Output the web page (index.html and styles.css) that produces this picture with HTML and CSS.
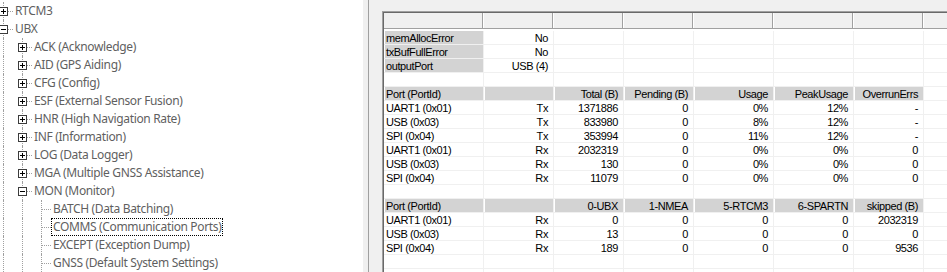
FILE: index.html
```html
<!DOCTYPE html>
<html>
<head>
<meta charset="utf-8">
<link rel="stylesheet" href="styles.css">
</head>
<body>
<div class="tree">
  <div class="trow"><span class="col v h"><span class="box plus"></span></span><span class="lbl">RTCM3</span></div>
  <div class="trow"><span class="col v h"><span class="box"></span></span><span class="lbl">UBX</span></div>
  <div class="trow"><span class="col v"></span><span class="col v h"><span class="box plus"></span></span><span class="lbl">ACK (Acknowledge)</span></div>
  <div class="trow"><span class="col v"></span><span class="col v h"><span class="box plus"></span></span><span class="lbl">AID (GPS Aiding)</span></div>
  <div class="trow"><span class="col v"></span><span class="col v h"><span class="box plus"></span></span><span class="lbl">CFG (Config)</span></div>
  <div class="trow"><span class="col v"></span><span class="col v h"><span class="box plus"></span></span><span class="lbl">ESF (External Sensor Fusion)</span></div>
  <div class="trow"><span class="col v"></span><span class="col v h"><span class="box plus"></span></span><span class="lbl">HNR (High Navigation Rate)</span></div>
  <div class="trow"><span class="col v"></span><span class="col v h"><span class="box plus"></span></span><span class="lbl">INF (Information)</span></div>
  <div class="trow"><span class="col v"></span><span class="col v h"><span class="box plus"></span></span><span class="lbl">LOG (Data Logger)</span></div>
  <div class="trow"><span class="col v"></span><span class="col v h"><span class="box plus"></span></span><span class="lbl">MGA (Multiple GNSS Assistance)</span></div>
  <div class="trow"><span class="col v"></span><span class="col v h"><span class="box"></span></span><span class="lbl">MON (Monitor)</span></div>
  <div class="trow"><span class="col v"></span><span class="col v"></span><span class="col v h"></span><span class="lbl">BATCH (Data Batching)</span></div>
  <div class="trow"><span class="col v"></span><span class="col v"></span><span class="col v h"></span><span class="lbl sel">COMMS (Communication Ports)</span></div>
  <div class="trow"><span class="col v"></span><span class="col v"></span><span class="col v h"></span><span class="lbl">EXCEPT (Exception Dump)</span></div>
  <div class="trow"><span class="col v"></span><span class="col v"></span><span class="col v h"></span><span class="lbl">GNSS (Default System Settings)</span></div>
</div>
<div class="splitter"></div>
<div class="panel">
  <div class="frame">
    <div class="grid">
      <div class="hrow"><span class="hc"></span><span class="hc"></span><span class="hc"></span><span class="hc"></span><span class="hc"></span><span class="hc"></span><span class="hc"></span><span class="hc"></span></div>
      <div class="data">
        <div class="row"><span class="c g">memAllocError</span><span class="c r">No</span><span class="c"></span><span class="c"></span><span class="c"></span><span class="c"></span><span class="c"></span><span class="c"></span></div>
        <div class="row"><span class="c g">txBufFullError</span><span class="c r">No</span><span class="c"></span><span class="c"></span><span class="c"></span><span class="c"></span><span class="c"></span><span class="c"></span></div>
        <div class="row"><span class="c g">outputPort</span><span class="c r">USB (4)</span><span class="c"></span><span class="c"></span><span class="c"></span><span class="c"></span><span class="c"></span><span class="c"></span></div>
        <div class="row"><span class="c"></span><span class="c"></span><span class="c"></span><span class="c"></span><span class="c"></span><span class="c"></span><span class="c"></span><span class="c"></span></div>
        <div class="row"><span class="c g">Port (PortId)</span><span class="c g"></span><span class="c g r">Total (B)</span><span class="c g r">Pending (B)</span><span class="c g r">Usage</span><span class="c g r">PeakUsage</span><span class="c g r">OverrunErrs</span><span class="c"></span></div>
        <div class="row"><span class="c">UART1 (0x01)</span><span class="c r">Tx</span><span class="c r">1371886</span><span class="c r">0</span><span class="c r">0%</span><span class="c r">12%</span><span class="c r">-</span><span class="c"></span></div>
        <div class="row"><span class="c">USB (0x03)</span><span class="c r">Tx</span><span class="c r">833980</span><span class="c r">0</span><span class="c r">8%</span><span class="c r">12%</span><span class="c r">-</span><span class="c"></span></div>
        <div class="row"><span class="c">SPI (0x04)</span><span class="c r">Tx</span><span class="c r">353994</span><span class="c r">0</span><span class="c r">11%</span><span class="c r">12%</span><span class="c r">-</span><span class="c"></span></div>
        <div class="row"><span class="c">UART1 (0x01)</span><span class="c r">Rx</span><span class="c r">2032319</span><span class="c r">0</span><span class="c r">0%</span><span class="c r">0%</span><span class="c r">0</span><span class="c"></span></div>
        <div class="row"><span class="c">USB (0x03)</span><span class="c r">Rx</span><span class="c r">130</span><span class="c r">0</span><span class="c r">0%</span><span class="c r">0%</span><span class="c r">0</span><span class="c"></span></div>
        <div class="row"><span class="c">SPI (0x04)</span><span class="c r">Rx</span><span class="c r">11079</span><span class="c r">0</span><span class="c r">0%</span><span class="c r">0%</span><span class="c r">0</span><span class="c"></span></div>
        <div class="row"><span class="c"></span><span class="c"></span><span class="c"></span><span class="c"></span><span class="c"></span><span class="c"></span><span class="c"></span><span class="c"></span></div>
        <div class="row"><span class="c g">Port (PortId)</span><span class="c g"></span><span class="c g r">0-UBX</span><span class="c g r">1-NMEA</span><span class="c g r">5-RTCM3</span><span class="c g r">6-SPARTN</span><span class="c g r">skipped (B)</span><span class="c"></span></div>
        <div class="row"><span class="c">UART1 (0x01)</span><span class="c r">Rx</span><span class="c r">0</span><span class="c r">0</span><span class="c r">0</span><span class="c r">0</span><span class="c r">2032319</span><span class="c"></span></div>
        <div class="row"><span class="c">USB (0x03)</span><span class="c r">Rx</span><span class="c r">13</span><span class="c r">0</span><span class="c r">0</span><span class="c r">0</span><span class="c r">0</span><span class="c"></span></div>
        <div class="row"><span class="c">SPI (0x04)</span><span class="c r">Rx</span><span class="c r">189</span><span class="c r">0</span><span class="c r">0</span><span class="c r">0</span><span class="c r">9536</span><span class="c"></span></div>
        <div class="row"><span class="c"></span><span class="c"></span><span class="c"></span><span class="c"></span><span class="c"></span><span class="c"></span><span class="c"></span><span class="c"></span></div>
        <div class="row"><span class="c"></span><span class="c"></span><span class="c"></span><span class="c"></span><span class="c"></span><span class="c"></span><span class="c"></span><span class="c"></span></div>
      </div>
    </div>
  </div>
</div>
</body>
</html>
```
FILE: styles.css
```css
html, body {
  margin: 0;
  padding: 0;
}
body {
  display: flex;
  width: 947px;
  height: 272px;
  overflow: hidden;
  background: #f0f0f0;
}

/* ---------- tree ---------- */
.tree {
  width: 363px;
  flex: none;
  background: #fff;
  overflow: hidden;
  padding-top: 2px;
  box-sizing: border-box;
  font-family: "Noto Sans", sans-serif;
  font-size: 12px;
  letter-spacing: -0.35px;
  color: #5f5f5f;
}
.trow {
  display: flex;
  align-items: center;
  height: 18px;
  margin-left: -7px;
  white-space: nowrap;
}
.col {
  position: relative;
  flex: none;
  width: 19px;
  height: 18px;
}
.col.v::before {
  content: "";
  position: absolute;
  left: 10px;
  top: 0;
  bottom: 0;
  border-left: 1px dotted #a0a0a0;
}
.col.h::after {
  content: "";
  position: absolute;
  left: 10px;
  right: -1px;
  top: 9px;
  border-top: 1px dotted #a0a0a0;
}
.box {
  position: absolute;
  z-index: 1;
  left: 6px;
  top: 5px;
  width: 9px;
  height: 9px;
  box-sizing: border-box;
  border: 1px solid #3c3c3c;
  background: #fff;
}
.box::before {
  content: "";
  position: absolute;
  left: 1px;
  top: 3px;
  width: 5px;
  height: 1px;
  background: #000;
}
.box.plus::after {
  content: "";
  position: absolute;
  left: 3px;
  top: 1px;
  width: 1px;
  height: 5px;
  background: #000;
}
.lbl {
  margin-left: 1px;
  padding: 0 1px;
  border: 1px solid transparent;
  line-height: 16px;
}
.lbl.sel {
  border: 1px dotted #000;
}

/* ---------- splitter ---------- */
.splitter {
  flex: none;
  width: 5px;
  background: #f0f0f0;
  border-right: 1px solid #a0a0a0;
}

/* ---------- grid panel ---------- */
.panel {
  flex: 1;
  min-width: 0;
  overflow: hidden;
  padding: 11px 0 0 13px;
  background: #f0f0f0;
  font-family: "Liberation Sans", Arial, sans-serif;
  font-size: 11px;
  letter-spacing: -0.4px;
  color: #000;
}
.frame {
  border-top: 1px solid #a0a0a0;
  border-left: 1px solid #a0a0a0;
}
.grid {
  border-top: 1px solid #696969;
  border-left: 1px solid #696969;
}
.hrow, .row {
  display: grid;
  grid-template-columns: 100px 70px 70px 70px 80px 80px 70px 200px;
}
.hc {
  height: 16px;
  box-sizing: border-box;
  background: #f0f0f0;
  border-bottom: 1px solid #a0a0a0;
  box-shadow: inset -1px 0 0 #fff, inset -2px 0 0 #a0a0a0;
}
.data {
  background: #fff;
  padding-top: 2px;
}
.c {
  height: 14px;
  box-sizing: border-box;
  border-right: 1px solid #f0f0f0;
  border-bottom: 1px solid #f0f0f0;
  padding: 1px 5px 0 2px;
  line-height: 12px;
  white-space: nowrap;
  overflow: hidden;
}
.r {
  text-align: right;
}
.g {
  background: #d3d3d3;
  box-shadow: inset 1px 0 0 #fff;
}
```
